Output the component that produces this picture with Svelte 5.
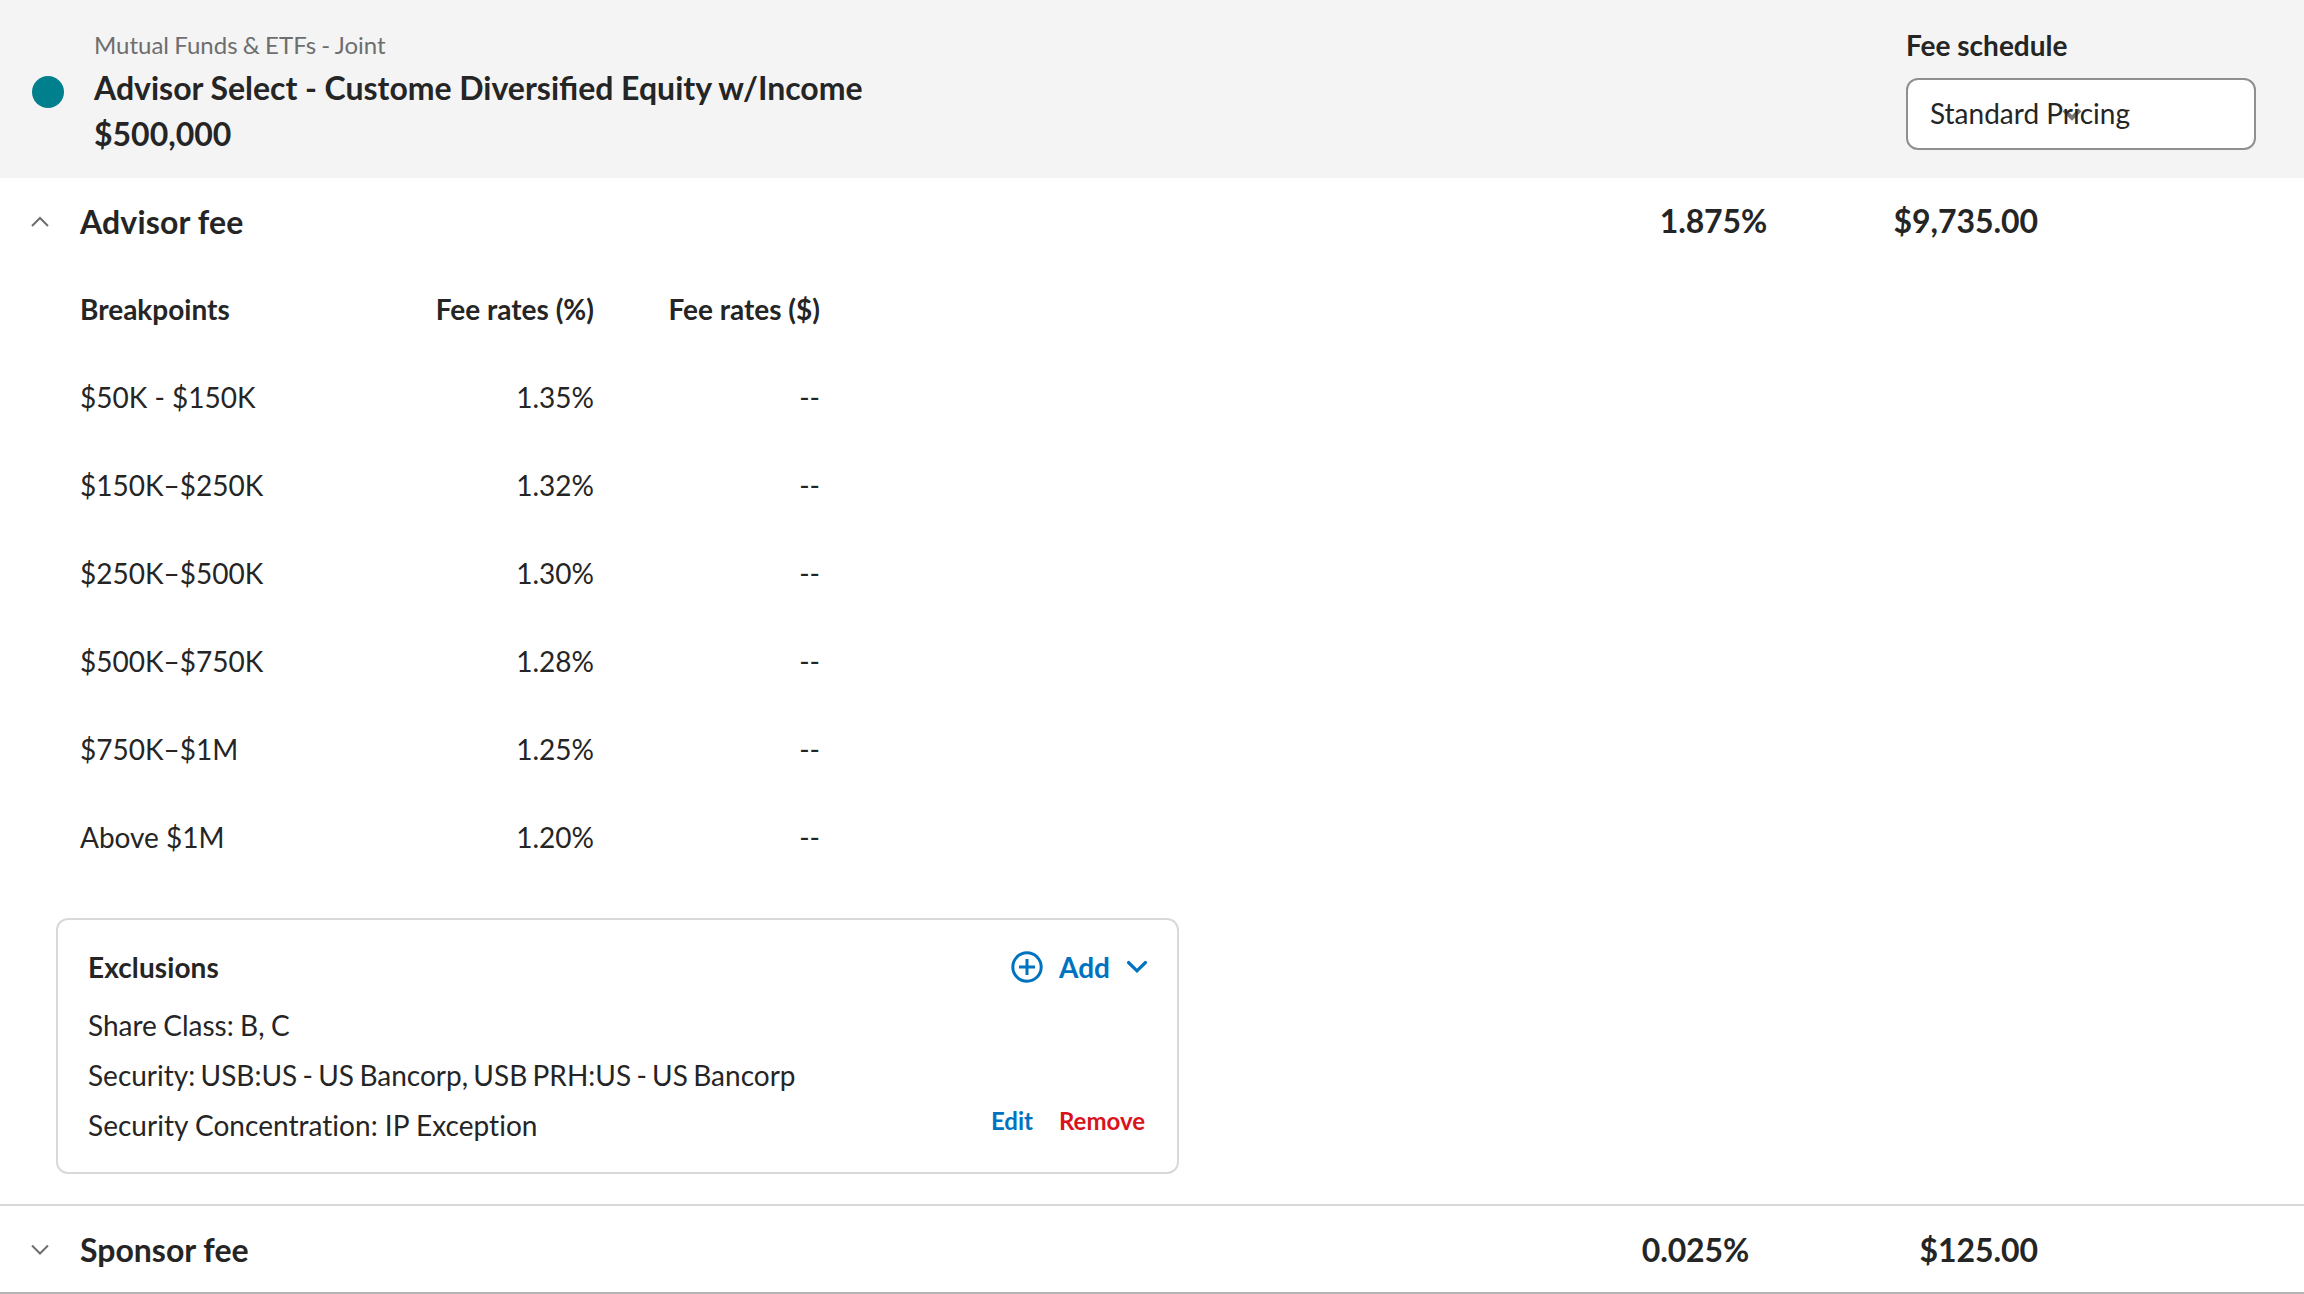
<script>
  const breakpoints = [
    { range: '$50K - $150K', percent: '1.35%', dollars: '--' },
    { range: '$150K–$250K', percent: '1.32%', dollars: '--' },
    { range: '$250K–$500K', percent: '1.30%', dollars: '--' },
    { range: '$500K–$750K', percent: '1.28%', dollars: '--' },
    { range: '$750K–$1M', percent: '1.25%', dollars: '--' },
    { range: 'Above $1M', percent: '1.20%', dollars: '--' }
  ];
  const exclusions = [
    { kind: 'share', text: 'Share Class: B, C' },
    { kind: 'security', text: 'Security: USB:US - US Bancorp, USB PRH:US - US Bancorp' },
    { kind: 'concentration', text: 'Security Concentration: IP Exception' }
  ];
</script>

<main>
  <header class="account">
    <span class="dot"></span>
    <div class="account-text">
      <div class="kind">Mutual Funds &amp; ETFs - Joint</div>
      <h1>Advisor Select - Custome Diversified Equity w/Income</h1>
      <div class="amount">$500,000</div>
    </div>
    <div class="schedule">
      <div class="label">Fee schedule</div>
      <div class="select">
        <svg class="select-arrow" viewBox="0 0 20 14" width="20" height="14"><path d="M2 2l8 8 8-8" /></svg>
        <span class="select-value">Standard Pricing</span>
      </div>
    </div>
  </header>

  <section class="advisor">
    <div class="fee-row first">
      <svg class="toggle" viewBox="0 0 18 12" width="18" height="12"><path d="M1 10l8-8 8 8" /></svg>
      <h2>Advisor fee</h2>
      <span class="rate">1.875%</span>
      <span class="total">$9,735.00</span>
    </div>

    <div class="table">
      <div class="row head">
        <span>Breakpoints</span><span class="num">Fee rates (%)</span><span class="num">Fee rates ($)</span>
      </div>
      {#each breakpoints as b}
        <div class="row">
          <span>{b.range}</span><span class="num">{b.percent}</span><span class="num">{b.dollars}</span>
        </div>
      {/each}
    </div>

    <div class="card">
      <div class="card-head">
        <h3>Exclusions</h3>
        <div class="add">
          <svg viewBox="0 0 32 32" width="32" height="32"><circle cx="16" cy="16" r="14.2" /><path d="M16 8v16M8 16h16" /></svg>
          <span>Add</span>
          <svg class="caret" viewBox="0 0 22 14" width="22" height="14"><path d="M2.5 2.5l8.5 8.3 8.5-8.3" /></svg>
        </div>
      </div>
      <div class="card-body">
        <div class="lines">
          {#each exclusions as line}<div class={line.kind}>{line.text}</div>{/each}
        </div>
        <div class="actions"><span class="edit">Edit</span><span class="remove">Remove</span></div>
      </div>
    </div>
  </section>

  <section class="fee-row sponsor">
    <svg class="toggle" viewBox="0 0 18 12" width="18" height="12"><path d="M1 2.5l8 8 8-8" /></svg>
    <h2>Sponsor fee</h2>
    <span class="rate">0.025%</span>
    <span class="total">$125.00</span>
  </section>
</main>

<style>
  :global(body) { background: #fff; }
  main {
    box-sizing: border-box;
    width: 2304px;
    height: 1294px;
    overflow: hidden;
    font-family: Lato, "Liberation Sans", sans-serif;
    font-size: 28px;
    color: #252525;
    white-space: nowrap;
  }
  h1, h2, h3 { margin: 0; font-weight: 700; }
  svg { fill: none; display: block; flex: none; }

  .account {
    box-sizing: border-box;
    height: 178px;
    display: flex;
    padding: 26px 48px 0 32px;
    background: #f4f4f4;
  }
  .dot { width: 32px; height: 32px; margin-top: 50px; border-radius: 50%; background: #007f8c; }
  .account-text { flex: 1; margin-left: 30px; }
  .kind { font-size: 24px; line-height: 38px; height: 39px; color: #6e6e6e; word-spacing: -0.9px; }
  h1, .amount { font-size: 32px; line-height: 46px; font-weight: 700; }
  h1 { word-spacing: -0.15px; }
  .schedule { width: 350px; }
  .label { font-weight: 700; line-height: 38px; height: 52px; }
  .select {
    position: relative;
    box-sizing: border-box;
    height: 72px;
    padding-left: 22px;
    line-height: 66px;
    border: 2px solid #8f8f8f;
    border-radius: 12px;
    background: #fff;
  }
  .select-arrow { position: absolute; left: 154px; top: 28px; stroke: #777; stroke-width: 4; }
  .select-value { position: relative; }

  .advisor { box-sizing: border-box; height: 1026px; }
  .fee-row { box-sizing: border-box; height: 88px; display: flex; align-items: center; padding: 0 266px 0 31px; font-size: 32px; font-weight: 700; }
  h2 { flex: 1; margin-left: 31px; font-size: 32px; }
  .toggle { stroke: #6e6e6e; stroke-width: 2; }
  .rate { letter-spacing: -0.15px; }
  .total { width: 271px; text-align: right; letter-spacing: -0.06px; }
  .first h2 { padding-bottom: 2px; letter-spacing: 0.15px; }
  .first .rate, .first .total { padding-bottom: 4px; }
  .sponsor { border-top: 2px solid #d9d9d9; border-bottom: 2px solid #b5b5b5; height: 90px; }
  .sponsor .total { width: 289px; }

  .table { padding-left: 80px; }
  .row { display: grid; grid-template-columns: 314px 200px 226px; height: 88px; line-height: 86px; }
  .num { text-align: right; }
  .head { font-weight: 700; }

  .card {
    box-sizing: border-box;
    width: 1123px;
    height: 256px;
    margin: 36px 0 0 56px;
    padding: 21px 30px 0;
    border: 2px solid #d9d9d9;
    border-radius: 12px;
  }
  .card-head { display: flex; justify-content: space-between; height: 59px; line-height: 52px; }
  h3 { font-size: 28px; letter-spacing: 0.1px; }
  .add { display: flex; align-items: center; height: 52px; margin-right: -1px; color: #0073c0; font-weight: 700; }
  .add svg { stroke: #0073c0; stroke-width: 3; }
  .add .caret { stroke-width: 3.2; stroke-linecap: round; }
  .add span { margin: 0 16px; }
  .card-body { display: flex; justify-content: space-between; }
  .lines { line-height: 50px; font-variant-ligatures: none; }
  .share { word-spacing: -0.8px; }
  .security { word-spacing: -1.85px; }
  .concentration { letter-spacing: 0.03px; }
  .actions { display: flex; gap: 26px; padding: 103px 2px 0 0; font-size: 24px; line-height: 36px; font-weight: 700; }
  .edit { color: #0073c0; }
  .remove { color: #d9131b; }
</style>
